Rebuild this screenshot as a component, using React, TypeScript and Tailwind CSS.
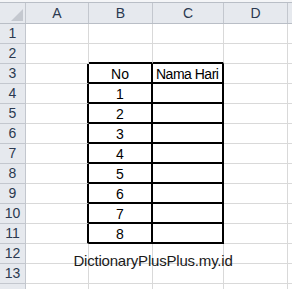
import React from "react";

const cols = [
  { key: "A", w: "w-[63px]" },
  { key: "B", w: "w-[64px]" },
  { key: "C", w: "w-[71px]" },
  { key: "D", w: "w-[64px]" },
];

const rows = Array.from({ length: 14 }, (_, i) => i + 1);

const tableCell = (row: number, col: string) => row >= 3 && row <= 11 && (col === "B" || col === "C");

const Cell: React.FC<{ row: number; col: string; w: string }> = ({ row, col, w }) => {
  const inTable = tableCell(row, col);
  // right border black when this cell or next one is in the table
  const nextCol = col === "A" ? "B" : col === "B" ? "C" : col === "C" ? "D" : "E";
  const rightBlack = inTable || tableCell(row, nextCol);
  const bottomBlack = inTable || tableCell(row + 1, col);

  let text = "";
  if (row === 3 && col === "B") text = "No";
  if (row === 3 && col === "C") text = "Nama Hari";
  if (row >= 4 && row <= 11 && col === "B") text = String(row - 3);

  return (
    <div
      className={`${w} h-[20px] shrink-0 flex items-end pb-[1px] whitespace-nowrap text-[14px] leading-none text-black ${
        col === "C" ? "justify-start pl-[3px] tracking-[-0.5px]" : "justify-center"
      } ${rightBlack ? "border-r-2 border-r-black" : "border-r border-r-[#d9d9d9]"} ${
        bottomBlack ? "border-b-2 border-b-black" : "border-b border-b-[#d9d9d9]"
      }`}
    >
      {text}
    </div>
  );
};

export default function App() {
  return (
    <div
      className="relative w-[292px] h-[289px] overflow-hidden bg-white"
      style={{ fontFamily: '"Liberation Sans", Arial, sans-serif' }}
    >
      <div className="h-[3px] bg-[#f4f5f7] border-b border-[#b9bec6]" />
      <div className="flex h-[21px] bg-[#e6e9ee] border-b border-[#b9bec6]">
        <div className="w-[26px] shrink-0 border-r border-[#c3c7ce] flex items-end justify-end p-[2px]">
          <svg width="12" height="12" viewBox="0 0 12 12">
            <polygon points="12,0 12,12 0,12" fill="#c4c8cf" />
          </svg>
        </div>
        {cols.map((c) => (
          <div
            key={c.key}
            className={`${c.w} shrink-0 border-r border-[#c3c7ce] flex items-center justify-center text-[14px] text-[#2b3950]`}
          >
            {c.key}
          </div>
        ))}
        <div className="flex-1" />
      </div>
      {rows.map((r) => (
        <div key={r} className="flex">
          <div className="w-[26px] h-[20px] shrink-0 bg-[#e6e9ee] border-r border-r-[#c3c7ce] border-b border-b-[#c3c7ce] flex items-center justify-center text-[14px] text-[#2b3950]">
            {r < 14 ? r : ""}
          </div>
          {cols.map((c) => (
            <Cell key={c.key} row={r} col={c.key} w={c.w} />
          ))}
          <div className="flex-1 h-[20px] border-b border-b-[#d9d9d9]" />
        </div>
      ))}
      <div className="absolute left-[60px] top-[250px] w-[186px] text-center text-[15px] text-[#1a1a1a] tracking-[-0.2px]">
        DictionaryPlusPlus.my.id
      </div>
    </div>
  );
}
